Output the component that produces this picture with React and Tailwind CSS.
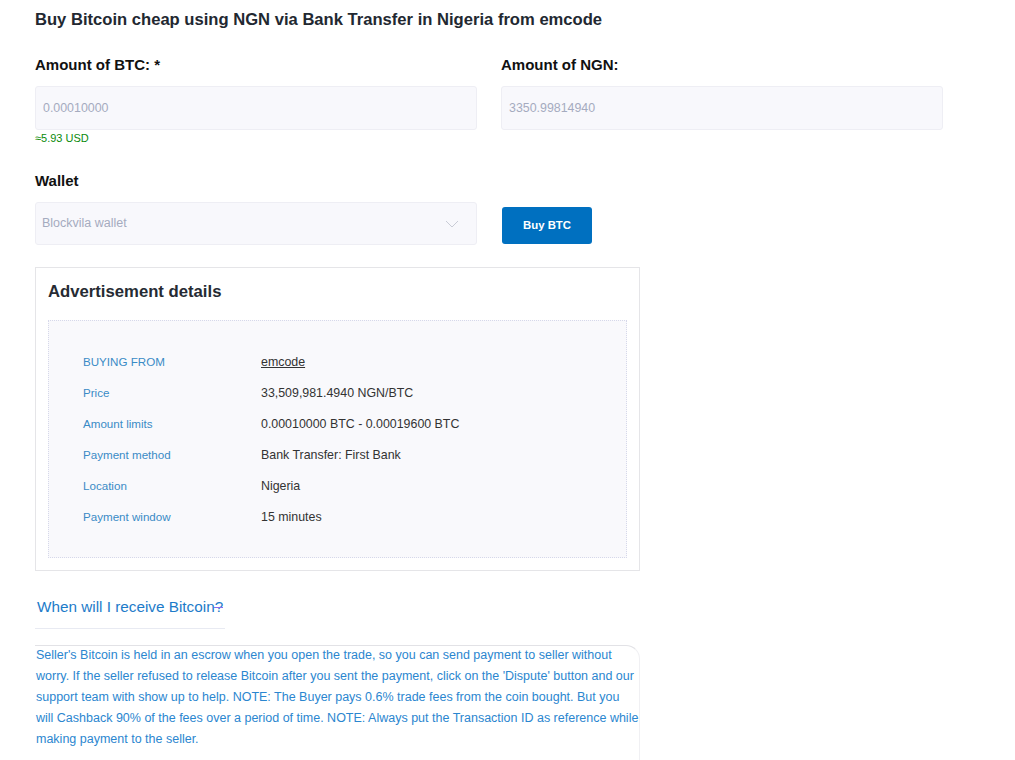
import { useState } from 'react';

const details = [
  ['BUYING FROM', 'emcode', true],
  ['Price', '33,509,981.4940 NGN/BTC'],
  ['Amount limits', '0.00010000 BTC - 0.00019600 BTC'],
  ['Payment method', 'Bank Transfer: First Bank'],
  ['Location', 'Nigeria'],
  ['Payment window', '15 minutes'],
];

export default function App() {
  const [btc, setBtc] = useState('');
  const [ngn, setNgn] = useState('');

  return (
    <div className="min-h-[760px] bg-white pl-[35px] pt-[8px] font-['Liberation_Sans',Arial,sans-serif]">
      <h1 className="text-[16.6px] leading-6 font-bold text-[#222831]">
        Buy Bitcoin cheap using NGN via Bank Transfer in Nigeria from emcode
      </h1>

      <div className="mt-[22px] grid w-[908px] grid-cols-2 gap-x-[24px]">
        <div>
          <label className="block text-[15px] leading-[22px] font-bold text-[#111]">Amount of BTC: *</label>
          <input
            value={btc}
            onChange={(e) => setBtc(e.target.value)}
            placeholder="0.00010000"
            className="mt-[10px] h-[44px] w-full rounded-[3px] border border-[#eeeef4] bg-[#f8f8fc] px-[7px] text-[12.4px] text-[#333] outline-none placeholder:text-[#a5abbf]"
          />
          <p className="mt-[1px] text-[11px] leading-[14px] text-[#0a8a0a]">≈5.93 USD</p>
        </div>
        <div>
          <label className="block text-[15px] leading-[22px] font-bold text-[#111]">Amount of NGN:</label>
          <input
            value={ngn}
            onChange={(e) => setNgn(e.target.value)}
            placeholder="3350.99814940"
            className="mt-[10px] h-[44px] w-full rounded-[3px] border border-[#eeeef4] bg-[#f8f8fc] px-[7px] text-[12.4px] text-[#333] outline-none placeholder:text-[#a5abbf]"
          />
        </div>
      </div>

      <label className="mt-[25px] block text-[15px] leading-[22px] font-bold text-[#111]">Wallet</label>
      <div className="mt-[10px] flex items-start">
        <div className="flex h-[43px] w-[442px] items-center justify-between rounded-[3px] border border-[#eeeef4] bg-[#f8f8fc] pr-[17px] pl-[6px]">
          <span className="text-[12.5px] text-[#a5abbf]">Blockvila wallet</span>
          <svg width="14" height="8" viewBox="0 0 14 8" fill="none">
            <polyline points="1,1 7,7 13,1" stroke="#c9ccd6" strokeWidth="1" />
          </svg>
        </div>
        <button className="mt-[5px] ml-[25px] h-[37px] w-[90px] rounded-[3px] bg-[#0070c0] text-[11.4px] font-bold text-white">
          Buy BTC
        </button>
      </div>

      <div className="mt-[22px] w-[605px] border border-[#e5e5e8] px-[12px] pt-[12px] pb-[12px]">
        <h2 className="text-[16.7px] leading-6 font-bold text-[#262b33]">Advertisement details</h2>
        <div className="mt-[16px] border border-dotted border-[#d6d8ea] bg-[#f9f9fc] pt-[25px] pb-[25px] pl-[34px]">
          {details.map(([label, value, link]) => (
            <div key={label} className="flex h-[31px] items-center leading-[16px]">
              <span className="w-[178px] text-[11.6px] text-[#3a8bc6]">{label}</span>
              <span className={`text-[12.4px] text-[#333] ${link ? 'underline' : ''}`}>{value}</span>
            </div>
          ))}
        </div>
      </div>

      <div className="mt-[24px] w-[190px] border-b border-[#e8eaf2] pb-[9px] pl-[2px]">
        <span className="relative text-[15.3px] leading-[22px] text-[#1d7bc9]">
          When will I receive Bitcoin?
          <span className="absolute top-[9px] right-0 h-[1px] w-[9px] bg-[#8a6cf0]" />
        </span>
      </div>

      <div className="mt-[16px] w-[605px] rounded-tr-[14px] border-t border-r border-b border-t-[#e2e2e6] border-r-[#f0f0f3] border-b-[#e6e6ea] pb-[10px] pl-[1px]">
        <p className="-mt-[1px] text-[12.5px] leading-[21px] text-[#2b86cf]">
          Seller's Bitcoin is held in an escrow when you open the trade, so you can send payment to seller without worry. If the seller refused to release Bitcoin after you sent the payment, click on the 'Dispute' button and our support team with show up to help. NOTE: The Buyer pays 0.6% trade fees from the coin bought. But you will Cashback 90% of the fees over a period of time. NOTE: Always put the Transaction ID as reference while making payment to the seller.
        </p>
      </div>
    </div>
  );
}
